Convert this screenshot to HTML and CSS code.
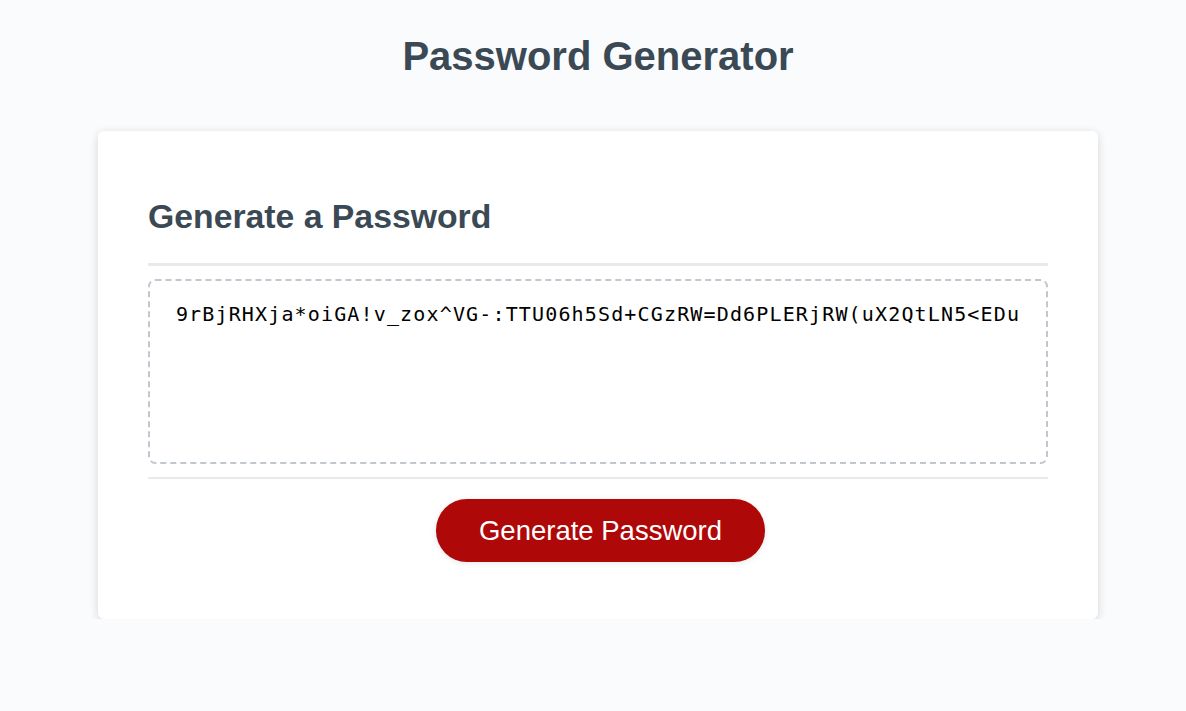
FILE: index.html
```html
<!DOCTYPE html>
<html lang="en">
<head>
<meta charset="UTF-8">
<title>Password Generator</title>
<link rel="stylesheet" href="styles.css">
</head>
<body>
<div class="wrapper">
  <header>
    <h1>Password Generator</h1>
  </header>
  <div class="card">
    <div class="card-header">
      <h2>Generate a Password</h2>
    </div>
    <div class="card-body">
      <textarea readonly id="password" class="password" aria-label="Generated Password">9rBjRHXja*oiGA!v_zox^VG-:TTU06h5Sd+CGzRW=Dd6PLERjRW(uX2QtLN5&lt;EDu</textarea>
    </div>
    <div class="card-footer">
      <button class="btn" type="button">Generate Password</button>
    </div>
  </div>
</div>
</body>
</html>
```
FILE: styles.css
```css
*, *::before, *::after {
  box-sizing: border-box;
}

html, body {
  margin: 0;
  padding: 0;
}

body {
  font-family: "Liberation Sans", Arial, sans-serif;
  background-color: #f9fbfd;
  padding-left: 10px;
}

.wrapper {
  padding: 0 25px;
}

header {
  text-align: center;
  padding: 33px 0 52px;
  color: #3b4954;
}

header h1 {
  margin: 0;
  font-size: 40px;
  line-height: 46px;
  font-weight: bold;
}

.card {
  background-color: #ffffff;
  border-radius: 6px;
  box-shadow: rgba(0, 0, 0, 0.15) 0 2.5px 10px 0;
  color: #3b4954;
  font-size: 22.5px;
  margin: 0 auto;
  max-width: 1000px;
  padding: 37.5px 50px;
}

.card-header h2 {
  margin: 28px 0;
  font-size: 33.75px;
  font-weight: bold;
  line-height: 38.8px;
}

.card-header::after {
  content: " ";
  display: block;
  width: 100%;
  background: #e7e9eb;
  height: 2.5px;
}

.card-body {
  min-height: 125px;
}

.password {
  -webkit-appearance: none;
  appearance: none;
  display: block;
  width: 100%;
  height: 185px;
  margin: 13.5px 0 12.5px;
  padding: 20.7px 18px 0;
  border: 2px dashed #c0c7cf;
  border-radius: 7.5px;
  resize: none;
  overflow: hidden;
  outline: none;
  background: #ffffff;
  color: #000000;
  font-family: "DejaVu Sans Mono", "Liberation Mono", monospace;
  font-size: 20px;
  line-height: 24px;
  letter-spacing: 1.15px;
  text-align: center;
}

.card-footer {
  text-align: center;
}

.card-footer::before {
  content: " ";
  display: block;
  width: 100%;
  background: #e7e9eb;
  height: 2.5px;
}

.btn {
  border: none;
  background-color: #af0808;
  border-radius: 31px;
  box-shadow: rgba(0, 0, 0, 0.1) 0 1px 6px 0;
  color: #ffffff;
  display: inline-block;
  font-family: "Liberation Sans", Arial, sans-serif;
  font-size: 27.5px;
  line-height: 27.5px;
  margin: 20px 20px 20px 25px;
  padding: 17.5px 42.5px;
  text-align: center;
  cursor: pointer;
}
```
